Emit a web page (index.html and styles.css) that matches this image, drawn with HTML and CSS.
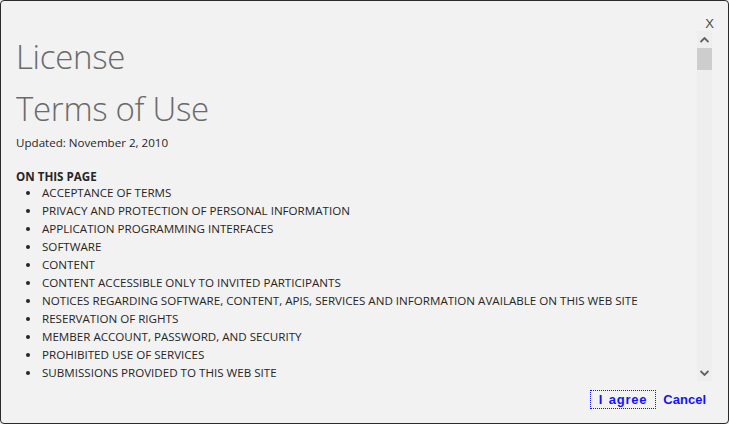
FILE: index.html
```html
<!DOCTYPE html>
<html lang="en">
<head>
    <meta charset="UTF-8">
    <title>License</title>
    <link rel="stylesheet" href="styles.css">
</head>
<body>
    <div class="dialog">
        <div class="title-bar">
            <span class="close-btn">X</span>
        </div>

        <div class="body">
            <div class="content">
                <h1 class="title">License</h1>
                <h2 class="subtitle">Terms of Use</h2>
                <p class="updated">Updated: November 2, 2010</p>

                <p class="toc-head">ON THIS PAGE</p>
                <ul class="toc">
                    <li>ACCEPTANCE OF TERMS</li>
                    <li>PRIVACY AND PROTECTION OF PERSONAL INFORMATION</li>
                    <li>APPLICATION PROGRAMMING INTERFACES</li>
                    <li>SOFTWARE</li>
                    <li>CONTENT</li>
                    <li>CONTENT ACCESSIBLE ONLY TO INVITED PARTICIPANTS</li>
                    <li>NOTICES REGARDING SOFTWARE, CONTENT, APIS, SERVICES AND INFORMATION AVAILABLE ON THIS WEB SITE</li>
                    <li>RESERVATION OF RIGHTS</li>
                    <li>MEMBER ACCOUNT, PASSWORD, AND SECURITY</li>
                    <li>PROHIBITED USE OF SERVICES</li>
                    <li>SUBMISSIONS PROVIDED TO THIS WEB SITE</li>
                </ul>
            </div>

            <!-- scrollbar -->
            <div class="scrollbar">
                <div class="scroll-arrow">
                    <svg width="9" height="6" viewBox="0 0 9 6"><path d="M0.5 5 L4.5 1 L8.5 5" fill="none" stroke="#606060" stroke-width="1.8"/></svg>
                </div>
                <div class="scroll-track">
                    <div class="scroll-thumb"></div>
                </div>
                <div class="scroll-arrow">
                    <svg width="9" height="6" viewBox="0 0 9 6"><path d="M0.5 1 L4.5 5 L8.5 1" fill="none" stroke="#606060" stroke-width="1.8"/></svg>
                </div>
            </div>
        </div>

        <div class="footer">
            <a class="action-link agree" href="#">I agree</a>
            <a class="action-link" href="#">Cancel</a>
        </div>
    </div>
</body>
</html>
```

FILE: styles.css
```css
html, body {
    margin: 0;
    padding: 0;
    background-color: #f2f2f2;
}

body {
    font-family: "Open Sans", "Noto Sans", Arial, sans-serif;
    color: #262626;
}

.dialog {
    width: 729px;
    height: 424px;
    box-sizing: border-box;
    border: 1px solid #2a2a2a;
    border-radius: 4px;
    background-color: #f2f2f2;
    display: flex;
    flex-direction: column;
    overflow: hidden;
}

.title-bar {
    height: 30px;
    display: flex;
    justify-content: flex-end;
    align-items: flex-end;
    padding-right: 14px;
}

.close-btn {
    font-family: "Liberation Sans", Arial, sans-serif;
    font-size: 13px;
    line-height: 13px;
    color: #4a4a4a;
    cursor: pointer;
    margin-bottom: 1px;
}

.body {
    height: 350px;
    display: flex;
    padding: 0 16px 0 15px;
}

.content {
    flex: 1;
    overflow: hidden;
}

.title,
.subtitle {
    font-weight: 300;
    font-size: 33px;
    color: #6a6a6a;
    margin: 0;
    line-height: 50px;
    letter-spacing: -0.3px;
}

.title {
    margin-top: 1px;
}

.subtitle {
    margin-top: 2px;
}

.updated {
    font-size: 11.6px;
    margin: 0;
    line-height: 18px;
}

.toc-head {
    font-size: 11.6px;
    font-weight: bold;
    margin: 16px 0 0 0;
    line-height: 18px;
}

.toc {
    margin: -2px 0 0 0;
    padding-left: 25px;
    font-size: 11.6px;
    line-height: 18px;
}

.toc li {
    padding-left: 1px;
}

.scrollbar {
    width: 15px;
    background-color: #eeeeee;
    display: flex;
    flex-direction: column;
}

.scroll-arrow {
    height: 17px;
    display: flex;
    align-items: center;
    justify-content: center;
}

.scroll-track {
    flex: 1;
}

.scroll-thumb {
    height: 22px;
    background-color: #cdcdcd;
}

.footer {
    flex: 1;
    display: flex;
    justify-content: flex-end;
    align-items: flex-start;
    padding: 9px 22px 0 0;
    gap: 7px;
}

.action-link {
    font-family: "Liberation Sans", Tahoma, Arial, sans-serif;
    font-weight: bold;
    font-size: 13px;
    color: #1212ff;
    text-decoration: none;
    line-height: 17px;
    padding: 1px 0;
}

.agree {
    border: 1px dotted #1212ff;
    padding: 0 8px;
    word-spacing: 1px;
    letter-spacing: 0.8px;
}
```
